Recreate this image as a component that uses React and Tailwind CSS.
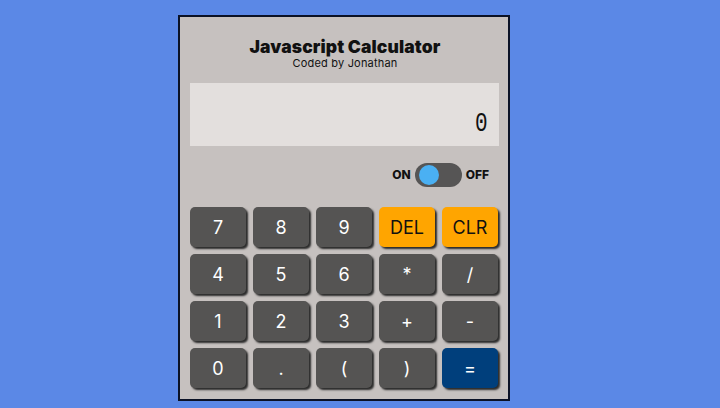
export default function App() {
  const keys = [
    ["7", "d"], ["8", "d"], ["9", "d"], ["DEL", "o"], ["CLR", "o"],
    ["4", "d"], ["5", "d"], ["6", "d"], ["*", "d"], ["/", "d"],
    ["1", "d"], ["2", "d"], ["3", "d"], ["+", "d"], ["-", "d"],
    ["0", "d"], [".", "d"], ["(", "d"], [")", "d"], ["=", "b"],
  ];
  const cls = {
    d: "bg-[#555453] text-white",
    o: "bg-[#ffa500] text-[#111]",
    b: "bg-[#003f7c] text-white",
  };
  return (
    <div className="w-[720px] h-[408px] bg-[#5b88e6] flex pl-[178px] pt-[15px] font-['Inter','Noto_Sans',sans-serif]">
      <div className="w-[332px] h-[386px] border-2 border-[#0b1226] bg-[#c6c1bf] pl-[10px] pr-[8px] flex flex-col">
        <div className="flex flex-col items-center pt-[20px]">
          <div className="text-[17.5px] leading-[20px] font-black text-[#111] tracking-[0.1px]">Javascript Calculator</div>
          <div className="text-[11px] leading-[14px] text-[#111] mt-[-1px] tracking-[0.2px]">Coded by Jonathan</div>
        </div>
        <div className="mt-[13px] h-[63px] w-[309px] bg-[#e3dfdd] flex items-end justify-end pr-[9px] pb-[6px]">
          <span className="text-[28px] leading-[32px] font-['Liberation_Mono',monospace] text-[#111] scale-x-[0.75]">0</span>
        </div>
        <div className="flex items-center justify-end mt-[17px] pr-[11px] gap-[4px] text-[12px] font-extrabold text-[#111]">
          <span>ON</span>
          <div className="w-[47px] h-[24px] rounded-full bg-[#565555] flex items-center pl-[4px]">
            <div className="w-[20px] h-[20px] rounded-full bg-[#4ab0f3]" />
          </div>
          <span>OFF</span>
        </div>
        <div className="grid grid-cols-5 gap-[7px] w-[308px] mt-[20px]">
          {keys.map(([k, t]) => (
            <div
              key={k}
              className={`h-[40px] rounded-[5px] flex items-center justify-center text-[18px] shadow-[2px_2px_2px_#2a2a2a] ${cls[t]}`}
            >
              {k}
            </div>
          ))}
        </div>
      </div>
    </div>
  );
}
